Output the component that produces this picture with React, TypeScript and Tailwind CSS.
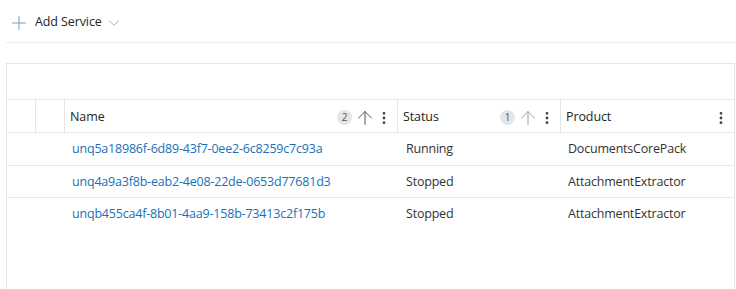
import { ArrowUp, ChevronDown, EllipsisVertical, Plus } from 'lucide-react';

const rows = [
    { name: 'unq5a18986f-6d89-43f7-0ee2-6c8259c7c93a', status: 'Running', product: 'DocumentsCorePack', h: 'h-[33px]' },
    { name: 'unq4a9a3f8b-eab2-4e08-22de-0653d77681d3', status: 'Stopped', product: 'AttachmentExtractor', h: 'h-[32px]' },
    { name: 'unqb455ca4f-8b01-4aa9-158b-73413c2f175b', status: 'Stopped', product: 'AttachmentExtractor', h: 'h-[32px]' },
];

function SortBadge({ n }: { n: number }) {
    return (
        <span className='flex items-center justify-center w-[15px] h-[15px] rounded-full bg-[#e6e6e6] text-[10px] text-[#555]'>
            {n}
        </span>
    );
}

function HeaderCell({ label, badge, arrowColor, className }: { label: string; badge?: number; arrowColor?: string; className: string }) {
    return (
        <div className={`flex items-center pt-[3px] pl-[5px] pr-[5px] border-r border-[#e5e5e5] ${className}`}>
            <span className='flex-1 text-[12.5px] tracking-[-0.1px] text-[#242424]'>{label}</span>
            {badge && (
                <div className='flex items-center gap-[2px] mr-0'>
                    <SortBadge n={badge} />
                    <ArrowUp size={22} strokeWidth={1} className={arrowColor} />
                </div>
            )}
            <EllipsisVertical size={16} strokeWidth={2.2} className='text-[#444]' />
        </div>
    );
}

export default function App() {
    return (
        <div className='w-[736px] h-[289px] bg-white overflow-hidden' style={{ fontFamily: '"Open Sans", "Noto Sans", sans-serif' }}>

            {/* toolbar */}
            <div className='ml-[6px] h-[43px] border-b border-[#ececec] flex items-center pt-[3px]'>
                <button className='flex items-center h-full pl-[2px] pr-2 text-[12.5px] tracking-[-0.1px] text-[#242424]'>
                    <Plus size={22} strokeWidth={1} className='text-[#6f8fb6] mr-[5px]' />
                    <span>Add Service</span>
                    <ChevronDown size={18} strokeWidth={1} className='text-[#888] ml-[3px]' />
                </button>
            </div>

            {/* grid */}
            <div className='mt-[20px] ml-[6px] w-[729px] h-[300px] border border-[#e6e6e6]'>
                <div className='h-[36px] border-b border-[#e6e6e6]' />

                <div className='flex h-[33px] border-b border-[#e6e6e6]'>
                    <div className='w-[29px] border-r border-[#e5e5e5]' />
                    <div className='w-[29px] border-r border-[#e5e5e5]' />
                    <HeaderCell label='Name' badge={2} arrowColor='text-[#444]' className='w-[333px]' />
                    <HeaderCell label='Status' badge={1} arrowColor='text-[#8a9a98]' className='w-[163px]' />
                    <HeaderCell label='Product' className='flex-1 border-r-0' />
                </div>

                {rows.map((row, i) => (
                    <div key={row.name} className={`flex ${row.h} items-center pt-[1px] text-[12.5px] tracking-[-0.2px] ${i < rows.length - 1 ? 'border-b border-[#e6e6e6]' : ''}`}>
                        <div className='w-[65px]' />
                        <div className='w-[333px] text-[#1a6fb8]'>{row.name}</div>
                        <div className='w-[163px] pl-[1px] text-[#333]'>{row.status}</div>
                        <div className='flex-1 text-[#333]'>{row.product}</div>
                    </div>
                ))}
            </div>
        </div>
    );
}
